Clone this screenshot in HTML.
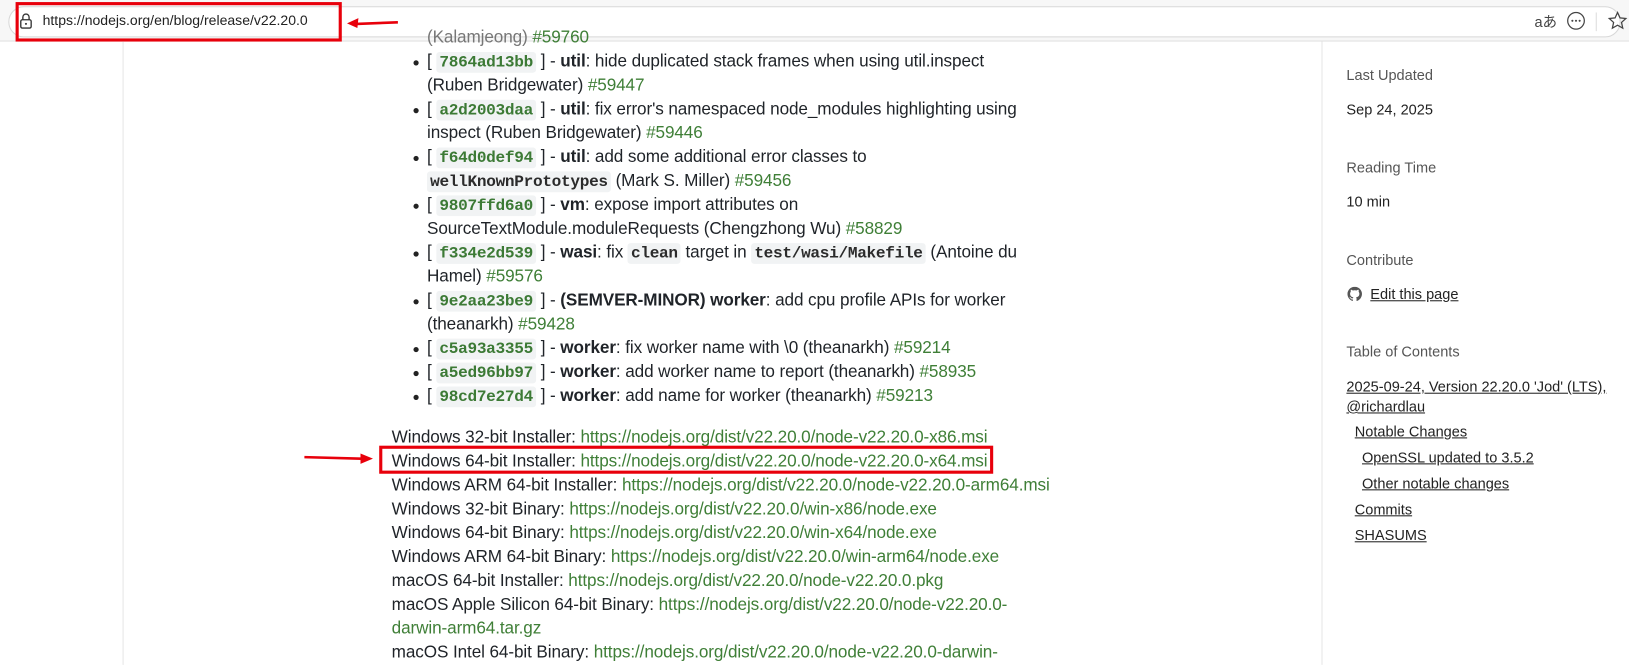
<!DOCTYPE html>
<html><head><meta charset="utf-8"><style>
*{margin:0;padding:0;box-sizing:border-box}
body{width:1629px;height:664px;overflow:hidden;background:#fff;font-family:"Liberation Sans",sans-serif;color:#1f2328;position:relative}
#w{position:absolute;left:0;top:0;width:1568px;height:640px;transform:scale(1.0389);transform-origin:0 0}
.bar{position:absolute;left:0;top:0;width:1568px;height:40px;background:#f7f7f7;border-bottom:1px solid #e0e0e0}
.addr{position:absolute;left:8px;top:6px;width:1552px;height:30px;background:#fff;border:1px solid #d8d8d8;border-radius:16px}
.url{position:absolute;left:41px;top:12px;font-size:13.5px;color:#222}
.box{position:absolute;border:3px solid #e8000b}
.vl{position:absolute;top:40px;bottom:0;width:1px;background:#e6e6e6}
.c{position:absolute;left:377px;font-size:16.5px;line-height:23px;white-space:nowrap;letter-spacing:-0.1px}
.c li{list-style:none;position:relative;padding-left:34px;height:23px}
.c li.b:before{content:"";position:absolute;left:21px;top:10px;width:5px;height:5px;border-radius:50%;background:#222}
code{font-family:"Liberation Mono",monospace;font-weight:bold;font-size:15.5px;line-height:1;background:#f1f3f4;padding:1px 3px;border-radius:3px;color:#2b2b2b;letter-spacing:-0.3px}
code.h{color:#3c7a35}
a{color:#3f7f37;text-decoration:none}
.s{position:absolute;left:1296px;font-size:14px;color:#222}
.g{color:#555}
.u{text-decoration:underline;color:#222}
</style></head><body><div id="w">
<div class="bar"><div class="addr"></div>
<svg style="position:absolute;left:18px;top:12px" width="14" height="16" viewBox="0 0 14 16"><rect x="2" y="7" width="10" height="8" rx="1.5" fill="none" stroke="#333" stroke-width="1.3"/><path d="M4 7V4.5a3 3 0 0 1 6 0V7" fill="none" stroke="#333" stroke-width="1.3"/><circle cx="7" cy="11" r="1" fill="#333"/></svg>
<div class="url">https://nodejs.org/en/blog/release/v22.20.0</div>
<div style="position:absolute;left:1477px;top:11px;font-size:14px;color:#444">aあ</div>
<svg style="position:absolute;left:1507px;top:10px" width="20" height="20"><circle cx="10" cy="10" r="8" fill="none" stroke="#444" stroke-width="1.2"/><circle cx="6.5" cy="10" r="1" fill="#444"/><circle cx="10" cy="10" r="1" fill="#444"/><circle cx="13.5" cy="10" r="1" fill="#444"/></svg>
<div style="position:absolute;left:1536px;top:12px;width:1px;height:18px;background:#ddd"></div>
<svg style="position:absolute;left:1547px;top:10px" width="20" height="20" viewBox="0 0 20 20"><path d="M10 2l2.4 5.2 5.6.6-4.2 3.8 1.2 5.5L10 14.3 5 17.1l1.2-5.5L2 7.8l5.6-.6z" fill="none" stroke="#444" stroke-width="1.2"/></svg>
</div>
<div class="box" style="left:15px;top:2px;width:314px;height:38px"></div>
<svg style="position:absolute;left:333px;top:16px" width="52" height="12"><path d="M50 5.5L10 7" stroke="#e8000b" stroke-width="2.5"/><path d="M1 6.5L12 1.5L11 11z" fill="#e8000b"/></svg>
<div class="vl" style="left:118px"></div>
<div class="vl" style="left:1272px"></div>
<div class="c" style="top:25px"><ul>
<li style="color:#777">(Kalamjeong) <a>#59760</a></li>
<li class="b">[ <code class="h">7864ad13bb</code> ] - <b>util</b>: hide duplicated stack frames when using util.inspect</li>
<li>(Ruben Bridgewater) <a>#59447</a></li>
<li class="b">[ <code class="h">a2d2003daa</code> ] - <b>util</b>: fix error's namespaced node_modules highlighting using</li>
<li>inspect (Ruben Bridgewater) <a>#59446</a></li>
<li class="b">[ <code class="h">f64d0def94</code> ] - <b>util</b>: add some additional error classes to</li>
<li><code>wellKnownPrototypes</code> (Mark S. Miller) <a>#59456</a></li>
<li class="b">[ <code class="h">9807ffd6a0</code> ] - <b>vm</b>: expose import attributes on</li>
<li>SourceTextModule.moduleRequests (Chengzhong Wu) <a>#58829</a></li>
<li class="b">[ <code class="h">f334e2d539</code> ] - <b>wasi</b>: fix <code>clean</code> target in <code>test/wasi/Makefile</code> (Antoine du</li>
<li>Hamel) <a>#59576</a></li>
<li class="b">[ <code class="h">9e2aa23be9</code> ] - <b>(SEMVER-MINOR) worker</b>: add cpu profile APIs for worker</li>
<li>(theanarkh) <a>#59428</a></li>
<li class="b">[ <code class="h">c5a93a3355</code> ] - <b>worker</b>: fix worker name with \0 (theanarkh) <a>#59214</a></li>
<li class="b">[ <code class="h">a5ed96bb97</code> ] - <b>worker</b>: add worker name to report (theanarkh) <a>#58935</a></li>
<li class="b">[ <code class="h">98cd7e27d4</code> ] - <b>worker</b>: add name for worker (theanarkh) <a>#59213</a></li>
</ul></div>
<div class="c" style="top:410px">
Windows 32-bit Installer: <a>https://nodejs.org/dist/v22.20.0/node-v22.20.0-x86.msi</a><br>
Windows 64-bit Installer: <a>https://nodejs.org/dist/v22.20.0/node-v22.20.0-x64.msi</a><br>
Windows ARM 64-bit Installer: <a>https://nodejs.org/dist/v22.20.0/node-v22.20.0-arm64.msi</a><br>
Windows 32-bit Binary: <a>https://nodejs.org/dist/v22.20.0/win-x86/node.exe</a><br>
Windows 64-bit Binary: <a>https://nodejs.org/dist/v22.20.0/win-x64/node.exe</a><br>
Windows ARM 64-bit Binary: <a>https://nodejs.org/dist/v22.20.0/win-arm64/node.exe</a><br>
macOS 64-bit Installer: <a>https://nodejs.org/dist/v22.20.0/node-v22.20.0.pkg</a><br>
macOS Apple Silicon 64-bit Binary: <a>https://nodejs.org/dist/v22.20.0/node-v22.20.0-</a><br>
<a>darwin-arm64.tar.gz</a><br>
macOS Intel 64-bit Binary: <a>https://nodejs.org/dist/v22.20.0/node-v22.20.0-darwin-</a>
</div>
<div class="box" style="left:365px;top:429px;width:591px;height:27px"></div>
<svg style="position:absolute;left:292px;top:435px" width="68" height="12"><path d="M1 5L56 6.5" stroke="#e8000b" stroke-width="2.5"/><path d="M67 6.5L55 1.5L55 11.5z" fill="#e8000b"/></svg>
<div class="s g" style="top:64px">Last Updated</div>
<div class="s" style="top:97px">Sep 24, 2025</div>
<div class="s g" style="top:153px">Reading Time</div>
<div class="s" style="top:186px">10 min</div>
<div class="s g" style="top:242px">Contribute</div>
<svg style="position:absolute;left:1297px;top:276px" width="14" height="14" viewBox="0 0 16 16"><path fill="#555" d="M8 0C3.58 0 0 3.58 0 8c0 3.54 2.29 6.53 5.47 7.59.4.07.55-.17.55-.38v-1.33c-2.23.48-2.7-1.07-2.7-1.07-.36-.92-.89-1.17-.89-1.17-.73-.5.05-.49.05-.49.8.06 1.23.83 1.23.83.72 1.22 1.87.87 2.33.66.07-.52.28-.87.5-1.07-1.78-.2-3.65-.89-3.65-3.95 0-.87.31-1.59.82-2.15-.08-.2-.36-1.02.08-2.12 0 0 .67-.21 2.2.82a7.6 7.6 0 0 1 4 0c1.53-1.04 2.2-.82 2.2-.82.44 1.1.16 1.92.08 2.12.51.56.82 1.27.82 2.15 0 3.07-1.87 3.75-3.65 3.95.29.25.54.73.54 1.48v2.2c0 .21.15.46.55.38A8 8 0 0 0 16 8c0-4.42-3.58-8-8-8z"/></svg>
<div class="s u" style="top:275px;left:1319px">Edit this page</div>
<div class="s g" style="top:330px">Table of Contents</div>
<div class="s u" style="top:363px;line-height:19px">2025-09-24, Version 22.20.0 'Jod' (LTS),<br>@richardlau</div>
<div class="s u" style="top:407px;left:1304px">Notable Changes</div>
<div class="s u" style="top:432px;left:1311px">OpenSSL updated to 3.5.2</div>
<div class="s u" style="top:457px;left:1311px">Other notable changes</div>
<div class="s u" style="top:482px;left:1304px">Commits</div>
<div class="s u" style="top:507px;left:1304px">SHASUMS</div>
</div></body></html>
